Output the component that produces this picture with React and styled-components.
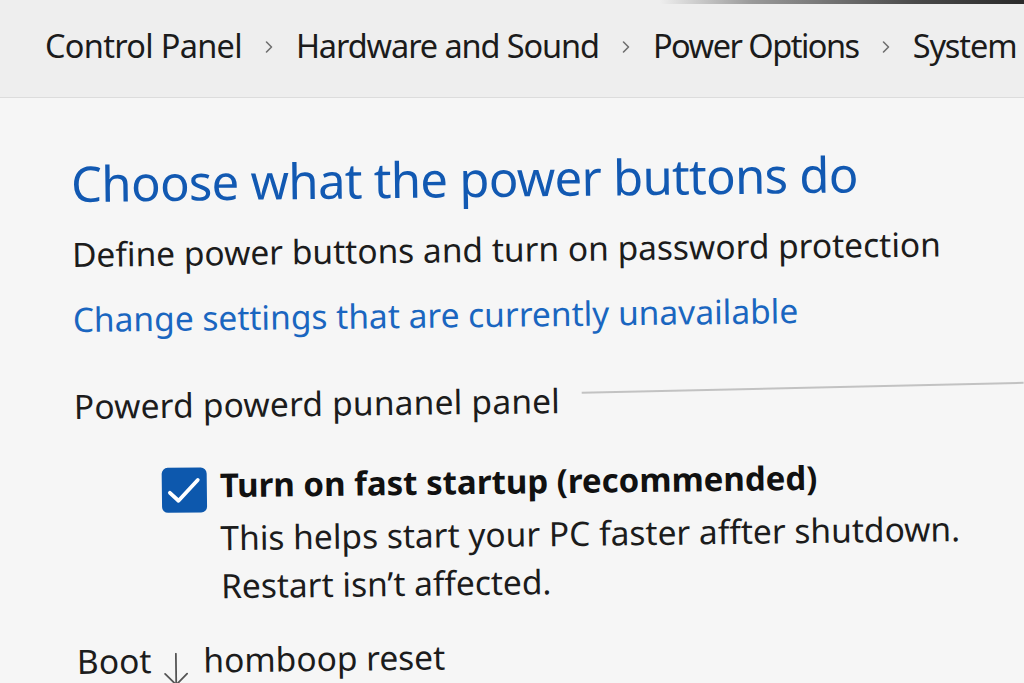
import React from "react";
import styled, { createGlobalStyle } from "styled-components";

const Global = createGlobalStyle`
  html, body { margin: 0; padding: 0; background: #f6f6f6; }
  body { font-family: "Noto Sans", "Open Sans", sans-serif; overflow: hidden; }
  * { box-sizing: border-box; }
`;

const Page = styled.div`
  width: 1024px;
  height: 683px;
  overflow: hidden;
  display: flex;
  flex-direction: column;
  background: #f6f6f6;
`;

const Header = styled.header`
  height: 98px;
  flex: none;
  background: #eeeeee;
  border-bottom: 1px solid #dcdcdc;
  display: flex;
  flex-direction: column;
  overflow: hidden;
`;

const Bezel = styled.div`
  height: 4px;
  margin-left: 660px;
  background: linear-gradient(90deg, rgba(80,80,80,0) 0%, #9a9a9a 25%, #4a4a4a 70%, #2a2a2a 100%);
  border-bottom-left-radius: 2px;
`;

const Breadcrumb = styled.nav`
  display: flex;
  align-items: center;
  padding: 22px 0 0 45px;
  white-space: nowrap;
  font-size: 32.5px;
  line-height: 40px;
  color: #1b1b1b;
`;

const Crumb = styled.span`
  letter-spacing: ${(p) => p.$ls ?? -1.1}px;
`;

const Sep = styled.span`
  display: inline-flex;
  align-items: center;
  margin: 2px 22px 0;
`;

const Content = styled.main`
  flex: 1;
  padding: 55px 0 0 74px;
  transform: rotate(-0.7deg);
  transform-origin: 74px 55%;
  display: flex;
  flex-direction: column;
`;

const Title = styled.h1`
  margin: 0;
  font-weight: 400;
  font-size: 49px;
  line-height: 60px;
  color: #1259b2;
  letter-spacing: -0.7px;
  white-space: nowrap;
`;

const Text = styled.p`
  margin: ${(p) => p.$mt || 0}px 0 0;
  font-size: 33.5px;
  line-height: 44px;
  color: ${(p) => (p.$link ? "#1a66c0" : "#1c1c1c")};
  white-space: nowrap;
  letter-spacing: ${(p) => p.$ls || 0}px;
`;

const SectionRow = styled.div`
  margin-top: 43px;
  display: flex;
  align-items: flex-start;
  gap: 22px;
`;

const Rule = styled.div`
  flex: 1;
  height: 2px;
  margin-top: 14px;
  background: #c2c2c2;
  transform: rotate(-0.6deg);
  transform-origin: 0 50%;
`;

const Option = styled.div`
  margin: 37px 0 0 87px;
  display: flex;
  gap: 13px;
  align-items: flex-start;
`;

const Box = styled.div`
  width: 45px;
  height: 45px;
  flex: none;
  border-radius: 6px;
  background: #0d58ad;
  display: flex;
  align-items: center;
  justify-content: center;
  margin-top: 4px;
`;

const OptionText = styled.div`
  display: flex;
  flex-direction: column;
`;

const OptionTitle = styled.div`
  font-size: 33px;
  line-height: 44px;
  font-weight: 700;
  color: #111;
  white-space: nowrap;
`;

const OptionLine = styled.div`
  margin-top: ${(p) => p.$mt || 0}px;
  font-size: 33.5px;
  line-height: 48px;
  color: #1c1c1c;
  white-space: nowrap;
`;

const BootLine = styled.p`
  margin: 28px 0 0;
  font-size: 33.5px;
  line-height: 44px;
  color: #1c1c1c;
  white-space: nowrap;
  display: flex;
  align-items: baseline;
`;

const ArrowIcon = styled.svg`
  margin: 0 14px 0 12px;
  align-self: flex-end;
  position: relative;
  top: 5px;
`;

const Chevron = () => (
  <svg width="10" height="16" viewBox="0 0 10 16">
    <path d="M2.5 3 L7.5 8 L2.5 13" fill="none" stroke="#6f6f6f" strokeWidth="1.6" strokeLinecap="round" strokeLinejoin="round" />
  </svg>
);

export default function App() {
  return (
    <Page>
      <Global />
      <Header>
        <Bezel />
        <Breadcrumb>
          <Crumb $ls={-0.7}>Control Panel</Crumb>
          <Sep><Chevron /></Sep>
          <Crumb>Hardware and Sound</Crumb>
          <Sep><Chevron /></Sep>
          <Crumb $ls={-1.5}>Power Options</Crumb>
          <Sep><Chevron /></Sep>
          <Crumb>System Se</Crumb>
        </Breadcrumb>
      </Header>
      <Content>
        <Title>Choose what the power buttons do</Title>
        <Text $mt={19}>Define power buttons and turn on password protection</Text>
        <Text $mt={21} $link>Change settings that are currently unavailable</Text>
        <SectionRow>
          <Text $ls={0.2}>Powerd powerd punanel panel</Text>
          <Rule />
        </SectionRow>
        <Option>
          <Box>
            <svg width="45" height="45" viewBox="0 0 45 45">
              <path d="M8 25 L16.5 33 L36 12.5" fill="none" stroke="#fff" strokeWidth="3.8" strokeLinecap="round" strokeLinejoin="round" />
            </svg>
          </Box>
          <OptionText>
            <OptionTitle>Turn on fast startup (recommended)</OptionTitle>
            <OptionLine $mt={6}>This helps start your PC faster affter shutdown.</OptionLine>
            <OptionLine>Restart isn’t affected.</OptionLine>
          </OptionText>
        </Option>
        <BootLine>
          Boot
          <ArrowIcon width="26" height="34" viewBox="0 0 26 34">
            <path d="M13 1 L13 32 M2 21 L13 32 L24 21" fill="none" stroke="#555" strokeWidth="1.8" strokeLinecap="round" strokeLinejoin="round" />
          </ArrowIcon>
          homboop reset
        </BootLine>
      </Content>
    </Page>
  );
}
